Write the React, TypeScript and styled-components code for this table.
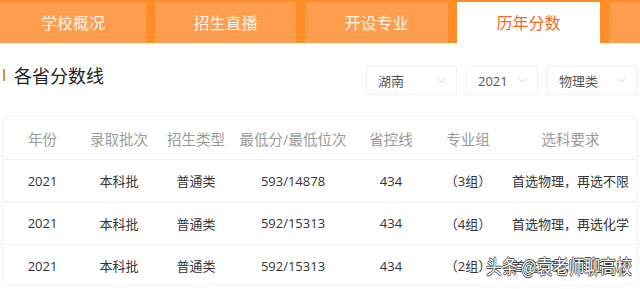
import styled, { createGlobalStyle } from 'styled-components';

const GlobalStyle = createGlobalStyle`
  html, body {
    margin: 0;
    padding: 0;
    background: #fff;
  }
  body {
    font-family: 'Open Sans', 'Noto Sans CJK SC', sans-serif;
  }
`;

const tabs = ['学校概况', '招生直播', '开设专业', '历年分数', ''];
const activeTab = 3;

const filters = [
  { label: '湖南', width: 91 },
  { label: '2021', width: 72 },
  { label: '物理类', width: 90 },
];

const columns = [
  { title: '年份', width: 77 },
  { title: '录取批次', width: 76 },
  { title: '招生类型', width: 78 },
  { title: '最低分/最低位次', width: 116 },
  { title: '省控线', width: 80 },
  { title: '专业组', width: 74 },
  { title: '选科要求', width: 131 },
];

const rows = [
  ['2021', '本科批', '普通类', '593/14878', '434', '（3组）', '首选物理，再选不限'],
  ['2021', '本科批', '普通类', '592/15313', '434', '（4组）', '首选物理，再选化学'],
  ['2021', '本科批', '普通类', '592/15313', '434', '（2组）', '首选物理，再选不限'],
];

const gridTemplate = columns.map((c) => `${c.width}px`).join(' ');

const Page = styled.div`
  position: relative;
  width: 640px;
  height: 289px;
  overflow: hidden;
  background: #fff;
`;

const TabBar = styled.nav`
  display: grid;
  grid-template-columns: 146px 141px 143px 143px 1fr;
  column-gap: 9px;
  height: 43px;
  padding-top: 2px;
  box-sizing: border-box;
  background: #ff8c24;
`;

const Tab = styled.div<{ $active?: boolean }>`
  display: flex;
  align-items: center;
  justify-content: center;
  background: ${(p) => (p.$active ? '#ffffff' : '#ff9d4e')};
  color: ${(p) => (p.$active ? '#f06a2c' : '#fff6ea')};
  font-family: 'Noto Sans CJK SC', sans-serif;
  font-size: 16px;
  padding-bottom: 1px;
`;

const SectionHead = styled.div`
  display: flex;
  align-items: center;
  justify-content: space-between;
  height: 74px;
  padding: 1px 3px 0 3px;
  box-sizing: border-box;
`;

const Title = styled.h2`
  display: flex;
  align-items: center;
  margin: 0 0 11px;
  font-family: 'Noto Sans CJK SC', sans-serif;
  font-size: 18px;
  font-weight: 400;
  color: #222;

  &::before {
    content: '';
    width: 2px;
    height: 12px;
    margin-right: 9px;
    background: #f0853a;
  }
`;

const Filters = styled.div`
  display: flex;
  gap: 9px;
`;

const Select = styled.div<{ $width: number }>`
  display: flex;
  align-items: center;
  justify-content: space-between;
  width: ${(p) => p.$width}px;
  height: 29px;
  padding: 0 10px 0 11px;
  box-sizing: border-box;
  border: 1px solid #f1f1f1;
  font-size: 13px;
  color: #555;

  svg {
    width: 9px;
    height: 9px;
  }
`;

const Card = styled.div`
  margin: 0 4px;
  height: 167px;
  border-radius: 6px;
  background: #fff;
  box-shadow: 0 0 6px rgba(0, 0, 0, 0.07);
  overflow: hidden;
`;

const Row = styled.div<{ $head?: boolean }>`
  display: grid;
  grid-template-columns: ${gridTemplate};
  height: ${(p) => (p.$head ? '42px' : '41.5px')};
  align-items: center;
  border-top: ${(p) => (p.$head ? 'none' : '1px solid #f1f1f1')};
  font-size: ${(p) => (p.$head ? '14.5px' : '13px')};
  color: ${(p) => (p.$head ? '#9a9a9a' : '#333')};
`;

const Cell = styled.div`
  text-align: center;
  white-space: nowrap;
`;

const Watermark = styled.div`
  position: absolute;
  right: 8px;
  top: 254px;
  font-family: 'Noto Sans CJK SC', sans-serif;
  font-size: 19px;
  line-height: 24px;
  color: #fff;
  text-shadow: 0.7px 0 0 #444, -0.7px 0 0 #444, 0 0.7px 0 #444, 0 -0.7px 0 #444;
  transform: scaleX(0.84);
  transform-origin: right center;
  white-space: nowrap;
`;

const Chevron = () => (
  <svg viewBox="0 0 10 10" fill="none">
    <path d="M1 3l4 4 4-4" stroke="#c8c8c8" strokeWidth="1" />
  </svg>
);

export default function App() {
  return (
    <>
      <GlobalStyle />
      <Page>
        <TabBar>
          {tabs.map((t, i) => (
            <Tab key={i} $active={i === activeTab}>
              {t}
            </Tab>
          ))}
        </TabBar>
        <SectionHead>
          <Title>各省分数线</Title>
          <Filters>
            {filters.map((f) => (
              <Select key={f.label} $width={f.width}>
                <span>{f.label}</span>
                <Chevron />
              </Select>
            ))}
          </Filters>
        </SectionHead>
        <Card>
          <Row $head>
            {columns.map((c) => (
              <Cell key={c.title}>{c.title}</Cell>
            ))}
          </Row>
          {rows.map((r, i) => (
            <Row key={i}>
              {r.map((v, j) => (
                <Cell key={j}>{v}</Cell>
              ))}
            </Row>
          ))}
        </Card>
        <Watermark>头条 @袁老师聊高校</Watermark>
      </Page>
    </>
  );
}
